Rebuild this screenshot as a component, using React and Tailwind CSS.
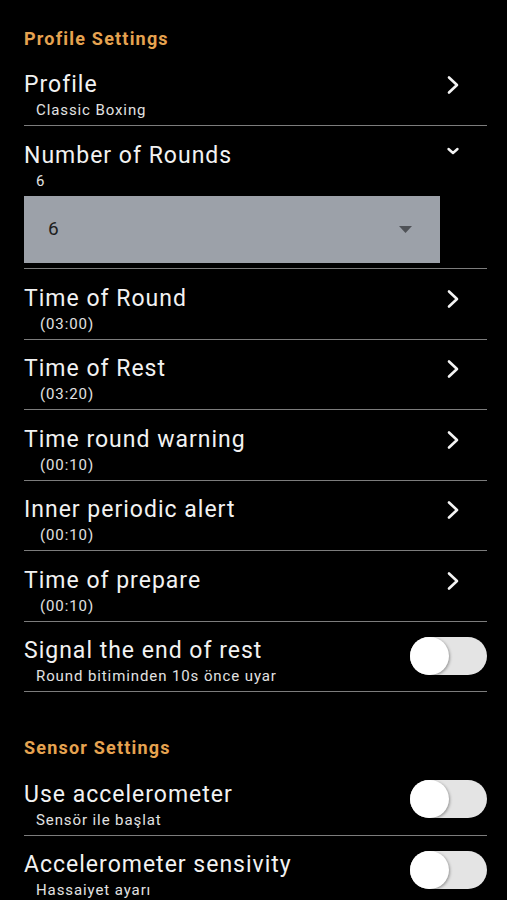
import { useState } from "react";

const ChevronRight = () => (
  <svg width="14" height="20" viewBox="0 0 14 20" className="mr-[27px] shrink-0">
    <path d="M3 2.5 L11 10 L3 17.5" fill="none" stroke="#f4f4f4" strokeWidth="2.6" strokeLinecap="round" strokeLinejoin="round" />
  </svg>
);

const ChevronDown = () => (
  <svg width="14" height="10" viewBox="0 0 14 10" className="mr-[27px] mb-[9px] shrink-0">
    <path d="M2.5 3 L7 7 L11.5 3" fill="none" stroke="#f4f4f4" strokeWidth="2.4" strokeLinecap="round" strokeLinejoin="round" />
  </svg>
);

const Toggle = ({ on, onClick }) => (
  <button
    onClick={onClick}
    className={`relative mt-[15px] w-[77px] h-[38px] rounded-full shrink-0 ${on ? "bg-[#e6a350]" : "bg-[#e4e4e4]"}`}
  >
    <span
      className={`absolute top-0 w-[39px] h-[38px] rounded-full bg-white shadow-[1px_1px_3px_rgba(0,0,0,0.35)] ${on ? "left-[38px]" : "left-0"}`}
    />
  </button>
);

const SectionHeader = ({ children, className = "" }) => (
  <div className={`h-[20px] leading-[20px] text-[18px] tracking-[1.2px] font-bold text-[#e6a350] ${className}`}>
    {children}
  </div>
);

const Title = ({ children }) => (
  <div className="h-[26px] leading-[26px] text-[23px] tracking-[1px] text-[#f2f2f2]">{children}</div>
);

const Subtitle = ({ children, indent }) => (
  <div
    className={`mt-[3px] h-[18px] leading-[18px] text-[15px] tracking-[0.9px] text-[#e2e2e2] ${indent ? "pl-4" : "pl-3"}`}
  >
    {children}
  </div>
);

const NavRow = ({ title, subtitle, indent }) => (
  <div className="border-b border-[#7c7c7c] pt-[16.5px] pb-[6px] flex items-start justify-between">
    <div className="flex flex-col">
      <Title>{title}</Title>
      <Subtitle indent={indent}>{subtitle}</Subtitle>
    </div>
    <div className="h-[26px] flex items-center">
      <ChevronRight />
    </div>
  </div>
);

const ToggleRow = ({ title, subtitle }) => {
  const [on, setOn] = useState(false);
  return (
    <div className="border-b border-[#7c7c7c] pt-[16.5px] pb-[6px] flex justify-between items-start">
      <div className="flex flex-col">
        <Title>{title}</Title>
        <Subtitle>{subtitle}</Subtitle>
      </div>
      <div className="-mt-[16.5px] self-start">
        <Toggle on={on} onClick={() => setOn(!on)} />
      </div>
    </div>
  );
};

export default function App() {
  const [rounds] = useState("6");

  return (
    <div className="min-h-[900px] bg-black pt-[29px] pl-6 pr-5 font-['Roboto',sans-serif] overflow-hidden">
      <SectionHeader className="mb-[6.5px]">Profile Settings</SectionHeader>

      <NavRow title="Profile" subtitle="Classic Boxing" />

      <div className="border-b border-[#7c7c7c] pt-[16.5px] pb-[5px]">
        <div className="flex items-center justify-between h-[26px]">
          <div className="leading-[26px] text-[23px] tracking-[1px] text-[#f2f2f2]">Number of Rounds</div>
          <ChevronDown />
        </div>
        <Subtitle>{rounds}</Subtitle>
        <div className="mt-[6.5px] w-[416px] h-[67px] bg-[#9ca1a9] flex items-center justify-between pl-6 pr-[28px]">
          <span className="text-[19px] tracking-[0.8px] text-[#1e1e1e]">{rounds}</span>
          <svg width="13" height="7" viewBox="0 0 13 7">
            <path d="M0 0 L13 0 L6.5 7 Z" fill="#4f5257" />
          </svg>
        </div>
      </div>

      <NavRow title="Time of Round" subtitle="(03:00)" indent />
      <NavRow title="Time of Rest" subtitle="(03:20)" indent />
      <NavRow title="Time round warning" subtitle="(00:10)" indent />
      <NavRow title="Inner periodic alert" subtitle="(00:10)" indent />
      <NavRow title="Time of prepare" subtitle="(00:10)" indent />
      <ToggleRow title="Signal the end of rest" subtitle="Round bitiminden 10s önce uyar" />

      <SectionHeader className="mt-[46px] mb-[7px]">Sensor Settings</SectionHeader>

      <ToggleRow title="Use accelerometer" subtitle="Sensör ile başlat" />
      <ToggleRow title="Accelerometer sensivity" subtitle="Hassaiyet ayarı" />
    </div>
  );
}
